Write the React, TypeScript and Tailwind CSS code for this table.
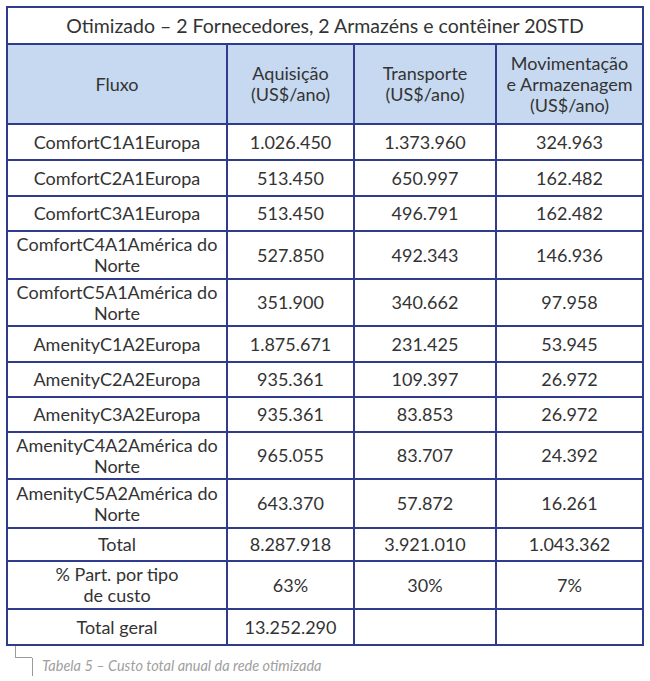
const rows: { fluxo: string[]; aq: string; tr: string; mv: string; h: string }[] = [
  { fluxo: ["ComfortC1A1Europa"], aq: "1.026.450", tr: "1.373.960", mv: "324.963", h: "h-[36px]" },
  { fluxo: ["ComfortC2A1Europa"], aq: "513.450", tr: "650.997", mv: "162.482", h: "h-[36px]" },
  { fluxo: ["ComfortC3A1Europa"], aq: "513.450", tr: "496.791", mv: "162.482", h: "h-[35px]" },
  { fluxo: ["ComfortC4A1América do", "Norte"], aq: "527.850", tr: "492.343", mv: "146.936", h: "h-[48px]" },
  { fluxo: ["ComfortC5A1América do", "Norte"], aq: "351.900", tr: "340.662", mv: "97.958", h: "h-[47px]" },
  { fluxo: ["AmenityC1A2Europa"], aq: "1.875.671", tr: "231.425", mv: "53.945", h: "h-[36px]" },
  { fluxo: ["AmenityC2A2Europa"], aq: "935.361", tr: "109.397", mv: "26.972", h: "h-[35px]" },
  { fluxo: ["AmenityC3A2Europa"], aq: "935.361", tr: "83.853", mv: "26.972", h: "h-[35px]" },
  { fluxo: ["AmenityC4A2América do", "Norte"], aq: "965.055", tr: "83.707", mv: "24.392", h: "h-[47px]" },
  { fluxo: ["AmenityC5A2América do", "Norte"], aq: "643.370", tr: "57.872", mv: "16.261", h: "h-[49px]" },
];

const cell = "border-2 border-[#2f3b8c] text-center align-middle p-0";

export default function App() {
  return (
    <div className="w-[650px] h-[681px] bg-white text-[#333] font-['Lato','Noto_Sans',sans-serif]">
      <div className="pt-[6px] pl-[6px]">
        <table className="border-collapse w-[636px] table-fixed text-[18px] leading-[21px]">
          <colgroup>
            <col className="w-[220px]" />
            <col className="w-[127px]" />
            <col className="w-[142px]" />
            <col className="w-[147px]" />
          </colgroup>
          <tbody>
            <tr className="h-[37px]">
              <td colSpan={4} className={cell + " text-[19.5px]"}>
                Otimizado – 2 Fornecedores, 2 Armazéns e contêiner 20STD
              </td>
            </tr>
            <tr className="h-[80px] bg-[#c6d9f0]">
              <td className={cell}>Fluxo</td>
              <td className={cell}>
                Aquisição
                <br />
                (US$/ano)
              </td>
              <td className={cell}>
                Transporte
                <br />
                (US$/ano)
              </td>
              <td className={cell}>
                Movimentação
                <br />e Armazenagem
                <br />
                (US$/ano)
              </td>
            </tr>
            {rows.map((r) => (
              <tr key={r.fluxo.join(" ")} className={r.h}>
                <td className={cell}>
                  {r.fluxo.map((l, i) => (
                    <div key={i}>{l}</div>
                  ))}
                </td>
                <td className={cell}>{r.aq}</td>
                <td className={cell}>{r.tr}</td>
                <td className={cell}>{r.mv}</td>
              </tr>
            ))}
            <tr className="h-[33px]">
              <td className={cell}>Total</td>
              <td className={cell}>8.287.918</td>
              <td className={cell}>3.921.010</td>
              <td className={cell}>1.043.362</td>
            </tr>
            <tr className="h-[48px]">
              <td className={cell}>
                % Part. por tipo
                <br />
                de custo
              </td>
              <td className={cell}>63%</td>
              <td className={cell}>30%</td>
              <td className={cell}>7%</td>
            </tr>
            <tr className="h-[36px]">
              <td className={cell}>Total geral</td>
              <td className={cell}>13.252.290</td>
              <td className={cell}></td>
              <td className={cell}></td>
            </tr>
          </tbody>
        </table>
        <div className="flex items-start pl-[9px]">
          <div className="w-[17px] h-[12px] border-l border-b border-[#9a9a9a]" />
          <div className="w-[1px] h-[18px] bg-[#9a9a9a] mt-[12px]" />
          <div className="ml-[9px] mt-[11px] text-[14.5px] leading-[18px] italic text-[#a0a0a0]">
            Tabela 5 – Custo total anual da rede otimizada
          </div>
        </div>
      </div>
    </div>
  );
}
